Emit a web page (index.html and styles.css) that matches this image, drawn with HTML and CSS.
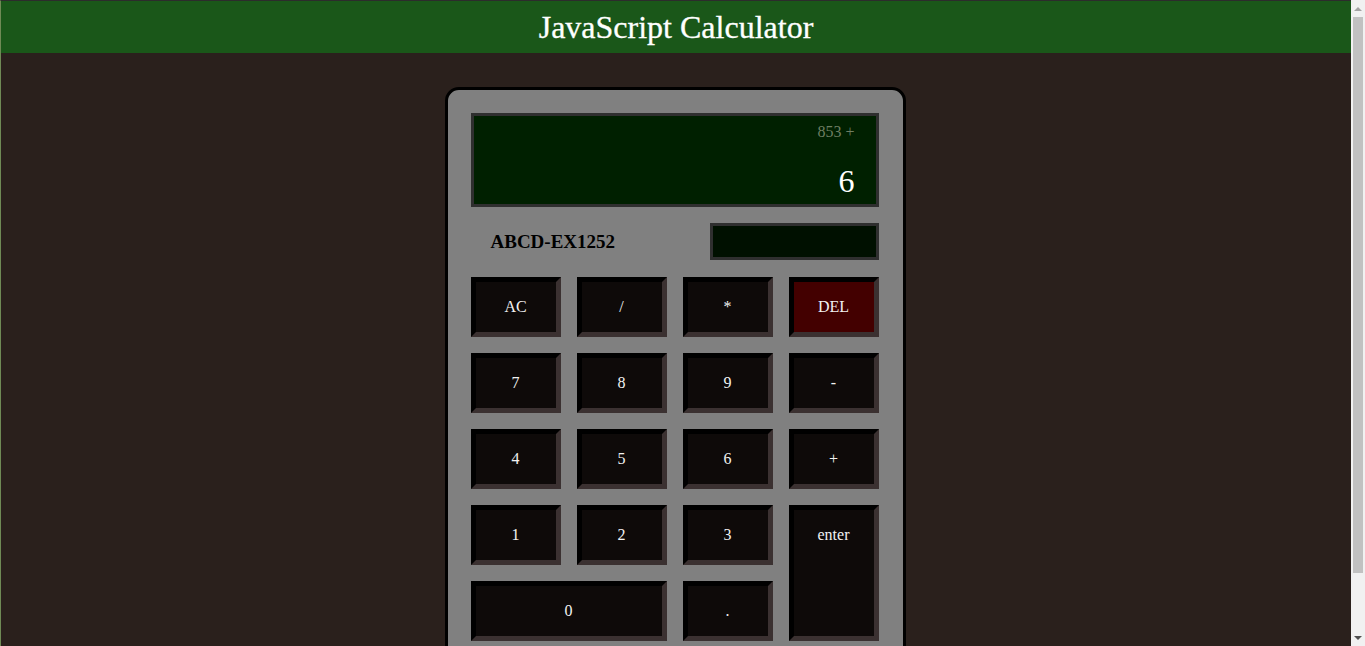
FILE: index.html
```html
<!DOCTYPE html>
<html lang="en">
<head>
<meta charset="utf-8">
<title>JavaScript Calculator</title>
<link rel="stylesheet" href="styles.css">
</head>
<body>
<div class="page">
  <header class="header">
    <h1 class="title">JavaScript Calculator</h1>
  </header>
  <main class="main">
    <div class="calc">
      <div class="display">
        <div class="prev">853 +</div>
        <div class="current">6</div>
      </div>
      <div class="info">
        <span class="model">ABCD-EX1252</span>
        <div class="mini"></div>
      </div>
      <div class="keys">
        <div class="key">AC</div>
        <div class="key">/</div>
        <div class="key">*</div>
        <div class="key key-del">DEL</div>
        <div class="key">7</div>
        <div class="key">8</div>
        <div class="key">9</div>
        <div class="key">-</div>
        <div class="key">4</div>
        <div class="key">5</div>
        <div class="key">6</div>
        <div class="key">+</div>
        <div class="key">1</div>
        <div class="key">2</div>
        <div class="key">3</div>
        <div class="key key-enter">enter</div>
        <div class="key key-zero">0</div>
        <div class="key">.</div>
      </div>
    </div>
  </main>
</div>
<div class="scrollbar" aria-hidden="true">
  <div class="sb-arrow sb-up"></div>
  <div class="sb-track"><div class="sb-thumb"></div></div>
  <div class="sb-arrow sb-down"></div>
</div>
</body>
</html>
```
FILE: styles.css
```css
html, body {
  margin: 0;
  padding: 0;
}
body {
  background: #2a201c;
  font-family: "Liberation Serif", "Times New Roman", serif;
}
.page {
  width: 1350px;
  border-top: 1px solid #2c2c2c;
  border-left: 1px solid #6f8a55;
  min-height: 710px;
}
.header {
  background: #1a5719;
  height: 52px;
}
.title {
  margin: 0;
  font-size: 32px;
  font-weight: normal;
  line-height: 52px;
  color: #ffffff;
  text-align: center;
  -webkit-text-stroke: 0.3px #ffffff;
}
.main {
  padding: 34px 2px 43px 0;
}
.calc {
  width: 408px;
  margin: 0 auto;
  padding: 23px 24px 23px 23px;
  background: #808080;
  border: 3px solid #000;
  border-radius: 14px;
}
.display {
  height: 94px;
  box-sizing: border-box;
  border: 3px solid #2f2f2f;
  background: #002000;
  padding: 6px 21px 5px;
  text-align: right;
}
.prev {
  font-size: 16px;
  line-height: 20px;
  color: #6e7e62;
}
.current {
  margin-top: 21px;
  font-size: 32px;
  line-height: 36px;
  color: #ffffff;
}
.info {
  display: flex;
  align-items: center;
  justify-content: space-between;
  margin: 16px 0 17px;
  height: 37px;
}
.model {
  padding-left: 20px;
  font-size: 19px;
  font-weight: bold;
  color: #000;
}
.mini {
  width: 169px;
  height: 37px;
  box-sizing: border-box;
  border: 3px solid #2f2f2f;
  background: #001000;
}
.keys {
  display: grid;
  grid-template-columns: repeat(4, 1fr);
  grid-auto-rows: 60px;
  gap: 16px;
}
.key {
  box-sizing: border-box;
  background: #0e0a09;
  border-style: solid;
  border-width: 5px;
  border-color: #000 #3b3131 #3b3131 #000;
  color: #f2f2f2;
  font-size: 16px;
  line-height: 20px;
  padding-top: 15px;
  text-align: center;
}
.key-del {
  background: #430000;
}
.key-enter {
  grid-column: 4;
  grid-row: 4 / span 2;
}
.key-zero {
  grid-column: 1 / span 2;
}
.scrollbar {
  position: fixed;
  top: 0;
  right: 0;
  width: 14px;
  height: 100vh;
  background: #f1f1f1;
  display: flex;
  flex-direction: column;
}
.sb-arrow {
  height: 17px;
  flex: none;
  display: flex;
  align-items: center;
  justify-content: center;
}
.sb-up::before,
.sb-down::before {
  content: "";
  width: 0;
  height: 0;
  border-left: 4px solid transparent;
  border-right: 4px solid transparent;
}
.sb-up::before {
  border-bottom: 4px solid #a3a3a3;
}
.sb-down::before {
  border-top: 4px solid #505050;
}
.sb-track {
  flex: 1;
  padding: 0 2px;
}
.sb-thumb {
  height: 556px;
  background: #c1c1c1;
}
```
